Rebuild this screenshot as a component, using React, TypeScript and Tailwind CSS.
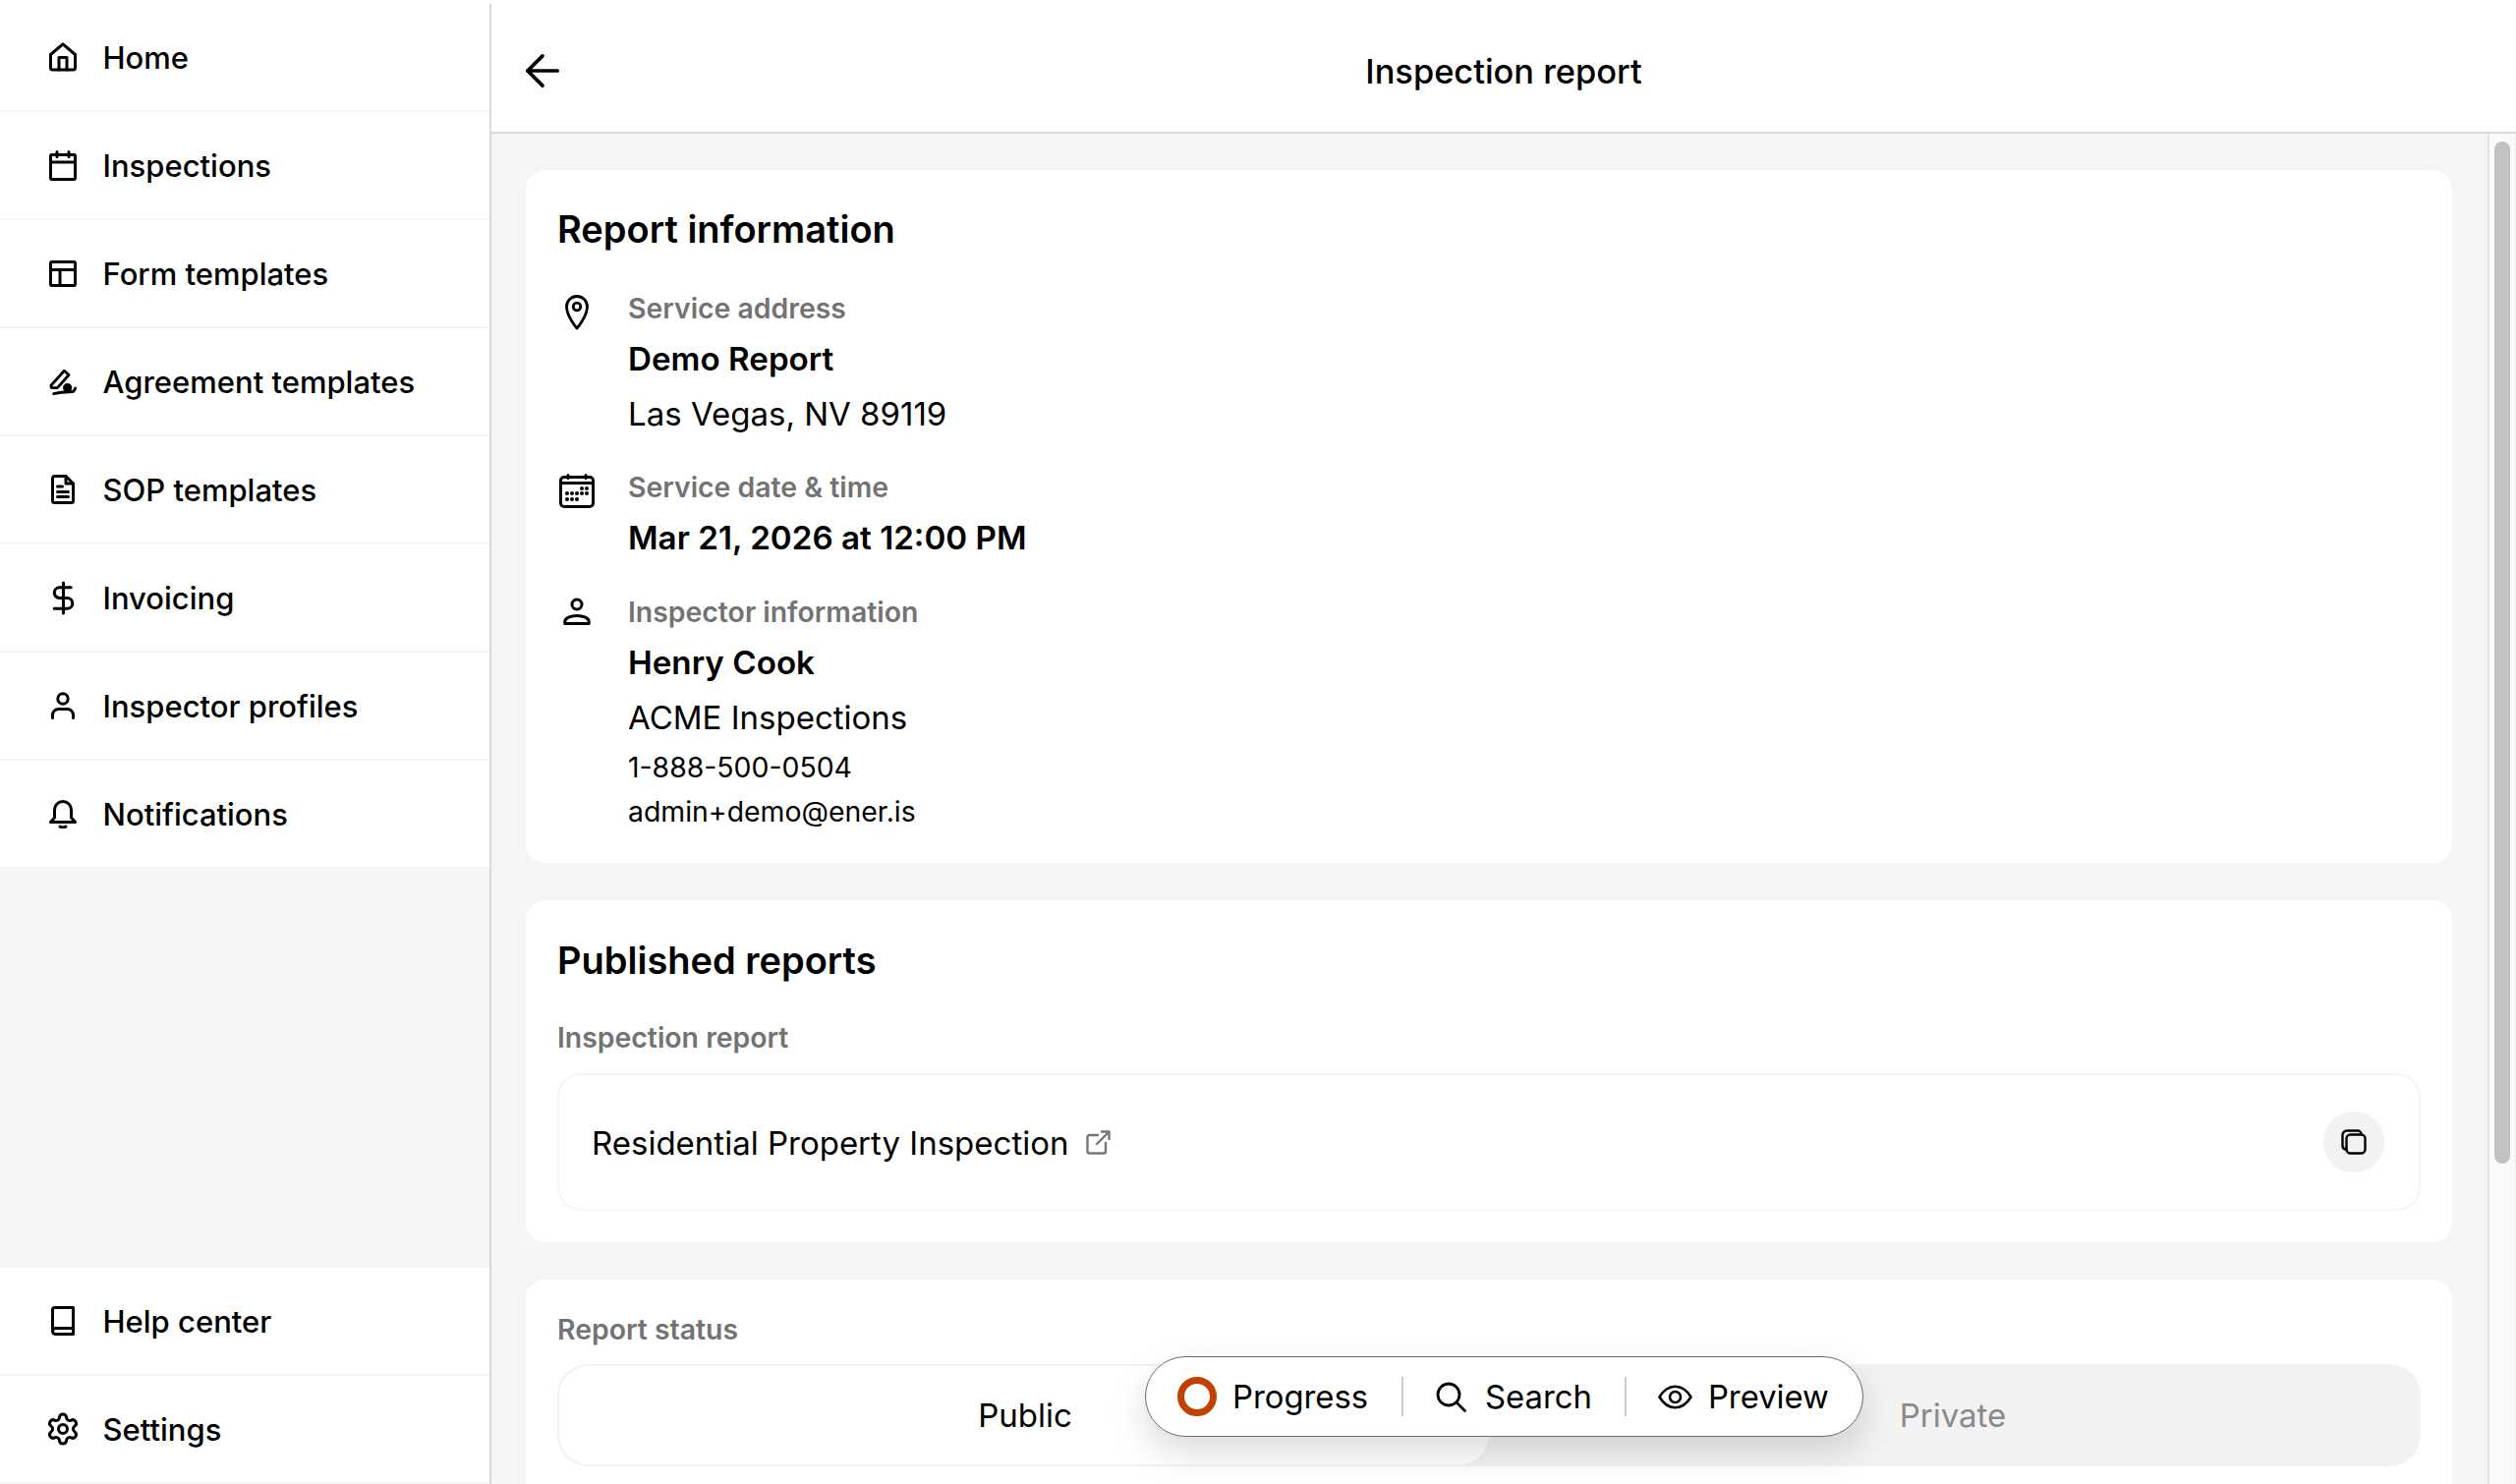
import React from "react";
import { ArrowLeft, DollarSign, Settings } from "lucide-react";

const S = { fill: "none", stroke: "currentColor", strokeLinecap: "round", strokeLinejoin: "round" } as const;

function HomeIcon() {
  return (
    <svg width="28" height="30" viewBox="0 0 28 30" {...S} strokeWidth="3">
      <path d="M1.5 12.5 14 1.8l12.5 10.7V26a2 2 0 0 1-2 2H3.500a2 2 0 0 1-2-2z" />
      <path d="M10 28V15.500h8V28" />
    </svg>
  );
}
function CalIcon() {
  return (
    <svg width="28" height="31" viewBox="0 0 28 31" {...S} strokeWidth="3">
      <rect x="1.500" y="4.500" width="25" height="25" rx="1.500" />
      <path d="M1.500 12h25M8 1.500v5M20 1.500v5" />
    </svg>
  );
}
function PanelIcon() {
  return (
    <svg width="28" height="27" viewBox="0 0 28 27" {...S} strokeWidth="3">
      <rect x="1.500" y="1.500" width="25" height="24" rx="1.500" />
      <path d="M1.500 9.500h25M11 9.500v16" />
    </svg>
  );
}
function SignIcon() {
  return (
    <svg width="30" height="29" viewBox="0 0 30 29" {...S} strokeWidth="3">
      <path d="M2 18.500 16.500 2.500l5 4.500L9 21H2.500z" />
      <circle cx="20" cy="21" r="3.500" fill="currentColor" />
      <path d="M5 27.500c6-1.500 12-2 17-2s5-.5 6.500-4" />
    </svg>
  );
}
function DocIcon() {
  return (
    <svg width="24" height="30" viewBox="0 0 24 30" {...S} strokeWidth="3">
      <path d="M15 1.500H3.500a2 2 0 0 0-2 2v23a2 2 0 0 0 2 2h17a2 2 0 0 0 2-2V9z" />
      <path d="M15 1.500V9h7.500M6.500 12h5M6.500 17.500h11M6.500 22.500h11" />
    </svg>
  );
}
function UserIcon() {
  return (
    <svg width="24" height="28" viewBox="0 0 24 28" {...S} strokeWidth="3">
      <circle cx="12" cy="7" r="5.200" />
      <path d="M1.500 26.500v-3a6 6 0 0 1 6-6h9a6 6 0 0 1 6 6v3" />
    </svg>
  );
}
function BellIcon() {
  return (
    <svg width="28" height="30" viewBox="0 0 28 30" {...S} strokeWidth="3">
      <path d="M5.500 19V11a8.500 8.500 0 0 1 17 0v8l4 4.500H1.500z" />
      <path d="M11 28c1.500 1 4.500 1 6 0" />
    </svg>
  );
}
function BookIcon() {
  return (
    <svg width="24" height="30" viewBox="0 0 24 30" {...S} strokeWidth="3">
      <path d="M1.500 24V3.500a2 2 0 0 1 2-2h19v27H4.500a3 3 0 0 1-3-3 3 3 0 0 1 3-3h18" />
    </svg>
  );
}
function PinIcon() {
  return (
    <svg width="24" height="36" viewBox="0 0 24 36" {...S} strokeWidth="2.800">
      <path d="M12 34S1.500 22 1.500 12a10.500 10.500 0 0 1 21 0C22.500 22 12 34 12 34z" />
      <circle cx="12" cy="12" r="3.800" />
    </svg>
  );
}
function CalDotsIcon() {
  const dots: [number, number][] = [
    [23, 15], [28, 15],
    [8, 20], [13, 20], [18, 20], [23, 20], [28, 20],
    [8, 26], [13, 26], [18, 26],
  ];
  return (
    <svg width="36" height="35" viewBox="0 0 36 35" {...S} strokeWidth="3">
      <rect x="1.500" y="3.500" width="33" height="30" rx="3.500" />
      <path d="M1.500 9.500h33M9 1.500v3M27 1.500v3" />
      {dots.map(([x, y]) => (
        <circle key={`${x}-${y}`} cx={x} cy={y} r="2" fill="currentColor" stroke="none" />
      ))}
    </svg>
  );
}
function PersonIcon() {
  return (
    <svg width="28" height="28" viewBox="0 0 28 28" {...S} strokeWidth="3">
      <circle cx="14" cy="7" r="5" />
      <path d="M1.800 26.500v-2c0-3.500 5.500-6 12.200-6s12.200 2.500 12.200 6v2z" />
    </svg>
  );
}
function ExtIcon() {
  return (
    <svg width="25" height="25" viewBox="0 0 25 25" {...S} strokeWidth="2.400" className="text-[#777777]">
      <path d="M12 5H3.500a2 2 0 0 0-2 2v14.500a2 2 0 0 0 2 2H18a2 2 0 0 0 2-2V13" />
      <path d="M16 1.500h7.500V9M23.500 1.500 11 14" />
    </svg>
  );
}
function SearchIcon() {
  return (
    <svg width="31" height="31" viewBox="0 0 31 31" {...S} strokeWidth="2.800">
      <circle cx="13" cy="13" r="11" />
      <path d="m21 21 8.500 8.500" />
    </svg>
  );
}
function EyeIcon() {
  return (
    <svg width="35" height="25" viewBox="0 0 35 25" {...S} strokeWidth="2.600">
      <path d="M1.500 12.500C6 5 11 1.800 17.500 1.800S29 5 33.500 12.500C29 20 24 23.200 17.500 23.200S6 20 1.500 12.500z" />
      <circle cx="17.500" cy="12.500" r="5.500" />
    </svg>
  );
}
function CopyIcon() {
  return (
    <svg width="26" height="26" viewBox="0 0 26 26" {...S} strokeWidth="2.400">
      <path d="M5.500 20.500a4 4 0 0 1-4-3.500V6a4.500 4.500 0 0 1 4.500-4.500h11a3.500 3.500 0 0 1 3.500 3.500" />
      <rect x="5.500" y="5.500" width="19" height="19" rx="4" />
    </svg>
  );
}

function NavRow({ icon, label }: { icon: React.ReactNode; label: string }) {
  return (
    <div className="flex h-[110px] items-center border-b-2 border-[#f5f5f5] bg-white pl-[50px]">
      <span className="mr-[26.5px] flex w-[28px] shrink-0 items-center justify-center">{icon}</span>
      <span className="pt-[2px] text-[31px] font-medium leading-[40px] text-black">{label}</span>
    </div>
  );
}

function InfoRow({ icon, children, iconTop = "pt-[6px]" }: { icon: React.ReactNode; children: React.ReactNode; iconTop?: string }) {
  return (
    <div className="flex">
      <div className={`flex w-[40px] shrink-0 justify-center ${iconTop}`}>{icon}</div>
      <div className="ml-[32px] flex flex-col">{children}</div>
    </div>
  );
}

const Label = ({ children }: { children: React.ReactNode }) => (
  <div className="text-[28.4px] font-semibold leading-[40px] text-[#737373]">{children}</div>
);
const Strong = ({ children }: { children: React.ReactNode }) => (
  <div className="mt-[3px] text-[33.2px] font-semibold leading-[56px] text-black">{children}</div>
);
const Body = ({ children }: { children: React.ReactNode }) => (
  <div className="text-[33px] font-normal leading-[56px] text-black">{children}</div>
);

export default function App() {
  return (
    <div className="relative flex h-[1510px] w-[2560px] overflow-hidden bg-white pt-[4px] font-['Inter',sans-serif] text-black">
      <aside className="flex w-[500px] shrink-0 flex-col border-r-2 border-[#d9d9d9] bg-[#f5f5f5]">
        <NavRow icon={<HomeIcon />} label="Home" />
        <NavRow icon={<CalIcon />} label="Inspections" />
        <NavRow icon={<PanelIcon />} label="Form templates" />
        <NavRow icon={<SignIcon />} label="Agreement templates" />
        <NavRow icon={<DocIcon />} label="SOP templates" />
        <NavRow icon={<DollarSign size={37} strokeWidth={2} className="max-w-none shrink-0" />} label="Invoicing" />
        <NavRow icon={<UserIcon />} label="Inspector profiles" />
        <NavRow icon={<BellIcon />} label="Notifications" />
        <div className="flex-1" />
        <NavRow icon={<BookIcon />} label="Help center" />
        <NavRow icon={<Settings size={36} strokeWidth={2} className="max-w-none shrink-0" />} label="Settings" />
      </aside>

      <main className="flex min-w-0 flex-1 flex-col">
        <header className="relative flex h-[132px] shrink-0 items-center justify-center border-b-2 border-[#d9d9d9] pt-[8px]">
          <button className="absolute left-[26px] top-[42px] flex">
            <ArrowLeft size={52} strokeWidth={1.7} />
          </button>
          <h1 className="text-[34.4px] font-medium leading-[48px]">Inspection report</h1>
        </header>

        <div className="flex min-h-0 flex-1">
          <div className="flex min-w-0 flex-1 flex-col gap-[38px] overflow-hidden bg-[#f5f5f5] pl-[35px] pr-[36px] pt-[37px]">
            <section className="shrink-0 rounded-[20px] bg-white px-[32px] pb-[30px] pt-[34px]">
              <h2 className="text-[38px] font-semibold leading-[52px]">Report information</h2>
              <div className="mt-[35px] flex flex-col">
                <InfoRow icon={<PinIcon />}>
                  <Label>Service address</Label>
                  <Strong>Demo Report</Strong>
                  <Body>Las Vegas, NV 89119</Body>
                </InfoRow>
                <div className="h-[27px]" />
                <InfoRow icon={<CalDotsIcon />}>
                  <Label>Service date &amp; time</Label>
                  <Strong>Mar 21, 2026 at 12:00 PM</Strong>
                </InfoRow>
                <div className="h-[28px]" />
                <InfoRow icon={<PersonIcon />} iconTop="pt-[5px]">
                  <Label>Inspector information</Label>
                  <Strong>Henry Cook</Strong>
                  <Body>ACME Inspections</Body>
                  <div className="text-[28.4px] leading-[46px]">1-888-500-0504</div>
                  <div className="text-[28.4px] leading-[44px]">admin+demo@ener.is</div>
                </InfoRow>
              </div>
            </section>

            <section className="shrink-0 rounded-[20px] bg-white px-[32px] pb-[32px] pt-[35px]">
              <h2 className="text-[38px] font-semibold leading-[52px]">Published reports</h2>
              <div className="mt-[33px]">
                <Label>Inspection report</Label>
              </div>
              <div className="mt-[16px] flex h-[140px] items-center justify-between rounded-[24px] border-2 border-[#f5f5f5] pl-[33px] pr-[35px]">
                <div className="flex items-center gap-[18px]">
                  <span className="pt-[1px] text-[33px] leading-[56px]">Residential Property Inspection</span>
                  <ExtIcon />
                </div>
                <button className="flex h-[62px] w-[62px] items-center justify-center rounded-full bg-[#f3f2f2]">
                  <CopyIcon />
                </button>
              </div>
            </section>

            <section className="min-h-[240px] flex-1 rounded-t-[20px] bg-white px-[32px] pt-[31px]">
              <Label>Report status</Label>
              <div className="mt-[15px] flex h-[104px] rounded-[32px] bg-[#f3f2f3]">
                <div className="flex w-[950px] items-center justify-center rounded-[32px] border-2 border-[#f3f2f3] bg-white pl-[2px] pt-[2px] text-[33px]">
                  Public
                </div>
                <div className="flex flex-1 items-center justify-center pr-[6px] pt-[2px] text-[33px] text-[#8a8a8a]">Private</div>
              </div>
            </section>
          </div>

          <div className="w-[29px] shrink-0 border-l-2 border-r border-l-[#e5e5e5] border-r-[#f0f0f0] bg-[#fafafa] pl-[5px] pt-[8px]">
            <div className="h-[1040px] w-[16px] rounded-full bg-[#c1c1c1]" />
          </div>
        </div>
      </main>

      <div className="absolute left-[1165px] top-[1380px] flex h-[82px] w-[731px] items-center rounded-full border border-[#6b6b6b] bg-white pl-[32px] shadow-[0_16px_36px_rgba(0,0,0,0.14)]">
        <span className="h-[40px] w-[40px] shrink-0 rounded-full border-[7px] border-[#c24100]" />
        <span className="ml-[16px] text-[32.8px] leading-[44px]">Progress</span>
        <span className="ml-[34px] h-[40px] w-[2px] bg-[#cccccc]" />
        <span className="ml-[33px] flex"><SearchIcon /></span>
        <span className="ml-[19px] text-[32.8px] leading-[44px]">Search</span>
        <span className="ml-[33px] h-[40px] w-[2px] bg-[#cccccc]" />
        <span className="ml-[32px] flex"><EyeIcon /></span>
        <span className="ml-[16px] text-[32.8px] leading-[44px]">Preview</span>
      </div>
    </div>
  );
}
